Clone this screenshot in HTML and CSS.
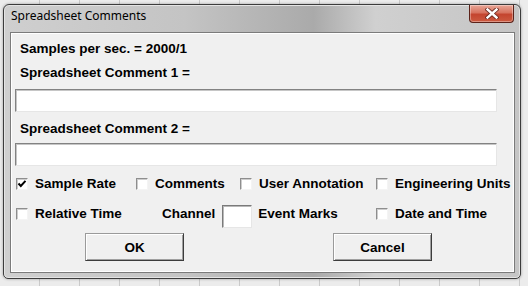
FILE: index.html
```html
<!DOCTYPE html>
<html lang="en">
<head>
    <meta charset="UTF-8">
    <title>Spreadsheet Comments</title>
    <link rel="stylesheet" href="styles.css">
</head>
<body>
    <div class="window">
        <div class="titlebar">
            <span class="title">Spreadsheet Comments</span>
            <button class="close" aria-label="Close">
                <svg width="14" height="11" viewBox="0 0 14 11">
                    <path d="M2.5 1.5 L11.5 9.5 M11.5 1.5 L2.5 9.5" stroke="#6b2a20" stroke-width="4.2" stroke-linecap="square"/>
                    <path d="M2.5 1.5 L11.5 9.5 M11.5 1.5 L2.5 9.5" stroke="#ffffff" stroke-width="2.4" stroke-linecap="square"/>
                </svg>
            </button>
        </div>

        <div class="client">
            <p class="line">Samples per sec. = 2000/1</p>
            <p class="line">Spreadsheet Comment 1 =</p>
            <input class="field" type="text">
            <p class="line gap9">Spreadsheet Comment 2 =</p>
            <input class="field" type="text">

            <div class="options">
                <label class="opt"><span class="box"><svg width="10" height="10" viewBox="0 0 10 10"><polyline points="1.5,4.5 3.8,7 8.5,1.8" fill="none" stroke="#000" stroke-width="2"/></svg></span>Sample Rate</label>
                <label class="opt"><span class="box"></span>Comments</label>
                <label class="opt"><span class="box"></span>User Annotation</label>
                <label class="opt"><span class="box"></span>Engineering Units</label>

                <label class="opt"><span class="box"></span>Relative Time</label>
                <div class="channel">
                    <span>Channel</span>
                    <input class="chan-field" type="text">
                    <span>Event Marks</span>
                </div>
                <label class="opt"><span class="box"></span>Date and Time</label>
            </div>

            <div class="buttons">
                <button class="btn">OK</button>
                <button class="btn">Cancel</button>
            </div>
        </div>
    </div>
</body>
</html>
```

FILE: styles.css
```css
* { margin: 0; padding: 0; box-sizing: border-box; }
body { height: 286px; overflow: hidden; padding: 4px 0 0 3px; background: #ececec repeating-linear-gradient(90deg, transparent 0 39px, #cacaca 39px 40px); font-family: "Liberation Sans", Arial, sans-serif; }

.window { width: 518px; height: 275px; display: flex; flex-direction: column; padding: 0 5px 5px 6px; border: 1px solid #3c3c3c; border-radius: 6px 6px 5px 5px; background: linear-gradient(90deg, #cfcfcf 0%, #c4c4c4 35%, #aaaaaa 60%, #d0d0d0 72%, #c5c5c5 100%); box-shadow: inset 0 0 0 1px #e4e4e4, 0 0 3px rgba(0,0,0,0.35); }
.titlebar { height: 27px; display: flex; justify-content: space-between; align-items: flex-start; }
.title { font-family: "Noto Sans", sans-serif; font-size: 12px; line-height: 16px; color: #000; padding: 3px 0 0 1px; }
.close { width: 45px; height: 18px; margin-right: 1px; display: flex; align-items: center; justify-content: center; border: 1px solid #5b2219; border-top: none; border-radius: 0 0 4px 4px; background: linear-gradient(#e9a798 0%, #d7735f 45%, #c4452f 55%, #cc5a40 100%); box-shadow: inset 0 0 0 1px rgba(255,255,255,0.35); }

.client { flex: 1; display: flex; flex-direction: column; align-items: stretch; padding: 8px 17px 0 4px; background: #f0f0f0; border: 1px solid #7b7b7b; box-shadow: inset 0 0 0 1px #ffffff; font-size: 13.5px; font-weight: bold; color: #000; }
.line { line-height: 16px; margin: 0 0 8px 5px; }
.line.gap9 { margin-top: 9px; margin-bottom: 6px; }
.field { height: 23px; background: #fff; border: 1px solid; border-color: #828282 #e6e6e6 #e6e6e6 #828282; box-shadow: inset 1px 1px #c6c6c6; outline: none; }

.options { display: grid; grid-template-columns: 120px 104px 136px 1fr; row-gap: 14px; margin: 10px 0 0 1px; line-height: 16px; }
.opt { display: flex; align-items: center; white-space: nowrap; }
.box { width: 12px; height: 12px; margin-right: 7px; display: flex; align-items: center; justify-content: center; background: #fff; border: 1px solid; border-color: #8e8e8e #f4f4f4 #f4f4f4 #8e8e8e; box-shadow: inset 1px 1px #cdcdcd; }
.channel { grid-column: 2 / span 2; display: flex; align-items: flex-start; padding-left: 26px; white-space: nowrap; }
.chan-field { width: 30px; height: 23px; margin: -1px 6px -6px 7px; background: #fff; border: 1px solid; border-color: #7a7a7a #e6e6e6 #e6e6e6 #7a7a7a; box-shadow: inset 1px 1px #b8b8b8; outline: none; }

.buttons { display: flex; gap: 149px; margin-top: 11px; padding-left: 70px; }
.btn { width: 99px; height: 28px; font-family: inherit; font-size: 13.5px; font-weight: bold; color: #000; background: #f0f0f0; border: 1px solid; border-color: #9a9a9a #3c3c3c #3c3c3c #9a9a9a; box-shadow: inset 1px 1px #ffffff, inset -1px -1px #a0a0a0; }
```
